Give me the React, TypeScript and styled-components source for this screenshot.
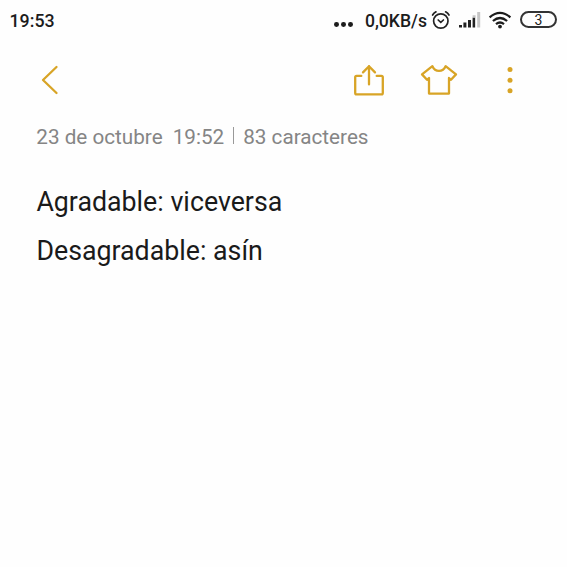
import React from "react";
import styled, { createGlobalStyle } from "styled-components";

const note = {
  date: "23 de octubre",
  time: "19:52",
  count: "83 caracteres",
  lines: ["Agradable: viceversa", "Desagradable: asín"],
};

const AlarmIcon = () => (
  <svg width="20" height="20" viewBox="0 0 20 20" fill="none" stroke="#222" strokeWidth="1.7" strokeLinecap="round">
    <circle cx="9.8" cy="11" r="7.2" />
    <path d="M7.2 10 L9.8 12.4 L12.4 10" />
    <path d="M1.6 5 Q2.8 3 5 1.8 M14.6 1.8 Q16.8 3 18 5" />
  </svg>
);

const SignalIcon = () => (
  <svg width="22" height="16" viewBox="0 0 22 16">
    <path fill="#222" d="M0 13h3v2.5h-3z M4.4 10.6h3v4.9h-3z M9 8h3v7.5h-3z M13.6 5.5h2.4v10h-2.4z" />
    <path fill="#c6c6c6" d="M13.6 3.2h3v2.3h-3z M16 5.5h.6v10h-.6z M18.2 0h3v15.5h-3z" />
  </svg>
);

const WifiIcon = () => (
  <svg width="24" height="18" viewBox="0 0 24 18" fill="none" stroke="#1c1c1c" strokeWidth="2.2">
    <path d="M1.6 6.4 Q12 -2.6 22.4 6.4" />
    <path d="M4.9 10 Q12 4 19.1 10" />
    <path d="M8 13.2 Q12 9.8 16 13.2" />
    <circle cx="12" cy="15.6" r="1.9" fill="#1c1c1c" stroke="none" />
  </svg>
);

const BackIcon = () => (
  <svg width="18" height="30" viewBox="0 0 18 30">
    <path d="M15.5 2 L2 15 L15.5 28" />
  </svg>
);

const ShareIcon = () => (
  <svg width="32" height="32" viewBox="0 0 32 32">
    <path d="M8.3 11.9 H3.6 Q2.2 11.9 2.2 13.3 V29 Q2.2 30.4 3.6 30.4 H28.4 Q29.8 30.4 29.8 29 V13.3 Q29.8 11.9 28.4 11.9 H23.7" />
    <path d="M16 20.4 V2.2 M10 8.4 L16 2.2 L22 8.4" />
  </svg>
);

const ShirtIcon = () => (
  <svg width="38" height="32" viewBox="0 0 38 32">
    <path d="M12.4 2.2 L2 10.4 L7 15.8 L9 14 V29.6 H29 V14 L31 15.8 L36 10.4 L25.6 2.2 Q23.6 6.8 19 6.8 Q14.4 6.8 12.4 2.2 Z" />
  </svg>
);

const MoreIcon = () => (
  <svg width="6" height="28" viewBox="0 0 6 28">
    <circle cx="3" cy="3.6" r="2.5" />
    <circle cx="3" cy="14.2" r="2.5" />
    <circle cx="3" cy="24.8" r="2.5" />
  </svg>
);

export default function App() {
  return (
    <Screen>
      <GlobalStyle />
      <StatusBar>
        <Clock>19:53</Clock>
        <StatusItems>
          <Dots>
            <Dot />
            <Dot />
            <Dot />
          </Dots>
          <Speed>0,0KB/s</Speed>
          <AlarmIcon />
          <Signal>
            <SignalIcon />
          </Signal>
          <WifiIcon />
          <Battery>3</Battery>
        </StatusItems>
      </StatusBar>
      <Toolbar>
        <ToolButton aria-label="Atrás">
          <BackIcon />
        </ToolButton>
        <Actions>
          <ToolButton aria-label="Compartir">
            <ShareIcon />
          </ToolButton>
          <ToolButton aria-label="Tema">
            <ShirtIcon />
          </ToolButton>
          <ToolButton aria-label="Más" $filled>
            <MoreIcon />
          </ToolButton>
        </Actions>
      </Toolbar>
      <Meta>
        <span>{note.date}</span>
        <Time>{note.time}</Time>
        <Divider />
        <span>{note.count}</span>
      </Meta>
      <Body>
        {note.lines.map((line) => (
          <Line key={line}>{line}</Line>
        ))}
      </Body>
    </Screen>
  );
}

const GlobalStyle = createGlobalStyle`
  body {
    margin: 0;
    background-color: #fefefe;
    font-family: Roboto, "Liberation Sans", sans-serif;
  }
  svg {
    display: block;
    flex: none;
  }
`;

const Screen = styled.main`
  box-sizing: border-box;
  width: 567px;
  height: 567px;
  overflow: hidden;
`;

const StatusBar = styled.header`
  box-sizing: border-box;
  height: 40px;
  padding: 0 10px 0 9.5px;
  display: flex;
  justify-content: space-between;
  align-items: center;
  color: #1c1c1c;
`;

const Clock = styled.span`
  padding-top: 1px;
  font-size: 17.8px;
  font-weight: 500;
`;

const StatusItems = styled.div`
  display: flex;
  align-items: center;
`;

const Dots = styled.div`
  display: flex;
  gap: 2.2px;
  margin: 9px 12px 0 0;
`;

const Dot = styled.i`
  width: 4.8px;
  height: 4.8px;
  border-radius: 50%;
  background-color: #1c1c1c;
`;

const Speed = styled.span`
  margin-right: 4px;
  padding-top: 2px;
  font-size: 17.6px;
  font-weight: 500;
`;

const Signal = styled.div`
  margin: 0 7px 0 8px;
`;

const Battery = styled.span`
  box-sizing: border-box;
  width: 37px;
  height: 17px;
  margin: -1px 0 0 8px;
  border: 2px solid #333;
  border-radius: 8.5px;
  display: flex;
  justify-content: center;
  align-items: center;
  font-size: 14px;
  line-height: 1;
`;

const Toolbar = styled.nav`
  box-sizing: border-box;
  height: 80px;
  padding: 0 53.6px 0 41px;
  display: flex;
  justify-content: space-between;
  align-items: center;
`;

const Actions = styled.div`
  display: flex;
  align-items: center;
  & > :nth-child(2) {
    margin: 0 49px 0 35.6px;
  }
`;

const ToolButton = styled.button<{ $filled?: boolean }>`
  padding: 0;
  border: 0;
  background: none;
  & svg {
    fill: ${({ $filled }) => ($filled ? "#d8a426" : "none")};
    stroke: ${({ $filled }) => ($filled ? "none" : "#d8a426")};
    stroke-width: 2.3;
    stroke-linecap: round;
    stroke-linejoin: round;
  }
`;

const Meta = styled.div`
  height: 33px;
  padding-left: 36.3px;
  display: flex;
  align-items: center;
  color: #858585;
  font-size: 20.7px;
`;

const Time = styled.span`
  margin-left: 10px;
`;

const Divider = styled.i`
  width: 1px;
  height: 17px;
  margin: -3px 9px 0;
  background-color: #999;
`;

const Body = styled.article`
  padding: 25px 36px 0 36.4px;
`;

const Line = styled.p`
  margin: 0;
  color: #1a1a1a;
  font-size: 26.75px;
  line-height: 49px;
`;
